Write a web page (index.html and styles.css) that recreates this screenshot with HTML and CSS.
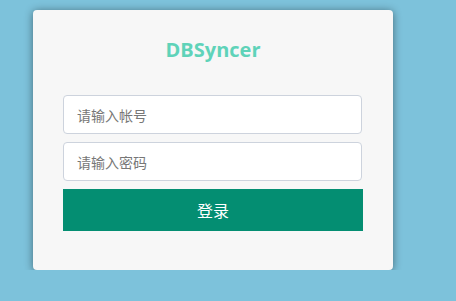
FILE: index.html
```html
<!DOCTYPE html>
<html lang="zh-CN">
<head>
  <meta charset="UTF-8" />
  <title>DBSyncer</title>
  <meta name="viewport" content="width=device-width, initial-scale=1.0"/>
  <link rel="stylesheet" href="styles.css">
</head>
<body>

<div class="login-box">
  <h1 class="login-title">DBSyncer</h1>

  <form class="login-form">
    <input class="login-input" type="text" placeholder="请输入帐号" />
    <input class="login-input" type="password" placeholder="请输入密码" />
    <button class="login-btn" type="button">登录</button>
  </form>
</div>

</body>
</html>
```

FILE: styles.css
```css
body {
  margin: 0;
  padding: 10px 0 0 33px;
  font-family: "Open Sans", "Noto Sans CJK SC", sans-serif;
  background-color: #7dc2db;
  color: #333;
}

.login-box {
  box-sizing: border-box;
  width: 360px;
  height: 260px;
  padding: 26px 30px 0;
  background-color: #f7f7f7;
  border-radius: 4px;
  box-shadow: 0 1px 8px rgba(0, 0, 0, 0.45);
}

.login-title {
  margin: 0;
  font-size: 20px;
  line-height: 28px;
  font-weight: 700;
  text-align: center;
  color: #5fd3b9;
}

.login-form {
  display: flex;
  flex-direction: column;
  margin-top: 31px;
}

.login-input {
  box-sizing: border-box;
  width: 299px;
  height: 39px;
  margin-bottom: 8px;
  padding: 0 13px;
  font-family: "Noto Sans CJK SC", sans-serif;
  font-size: 14px;
  color: #333;
  background-color: #fff;
  border: 1px solid #cdd3dd;
  border-radius: 4px;
  outline: none;
}

.login-input::placeholder {
  color: #777;
}

.login-btn {
  width: 300px;
  height: 42px;
  font-family: "Noto Sans CJK SC", sans-serif;
  font-size: 16px;
  color: #fff;
  background-color: #048e72;
  border: none;
  border-radius: 0;
  cursor: pointer;
}
```
